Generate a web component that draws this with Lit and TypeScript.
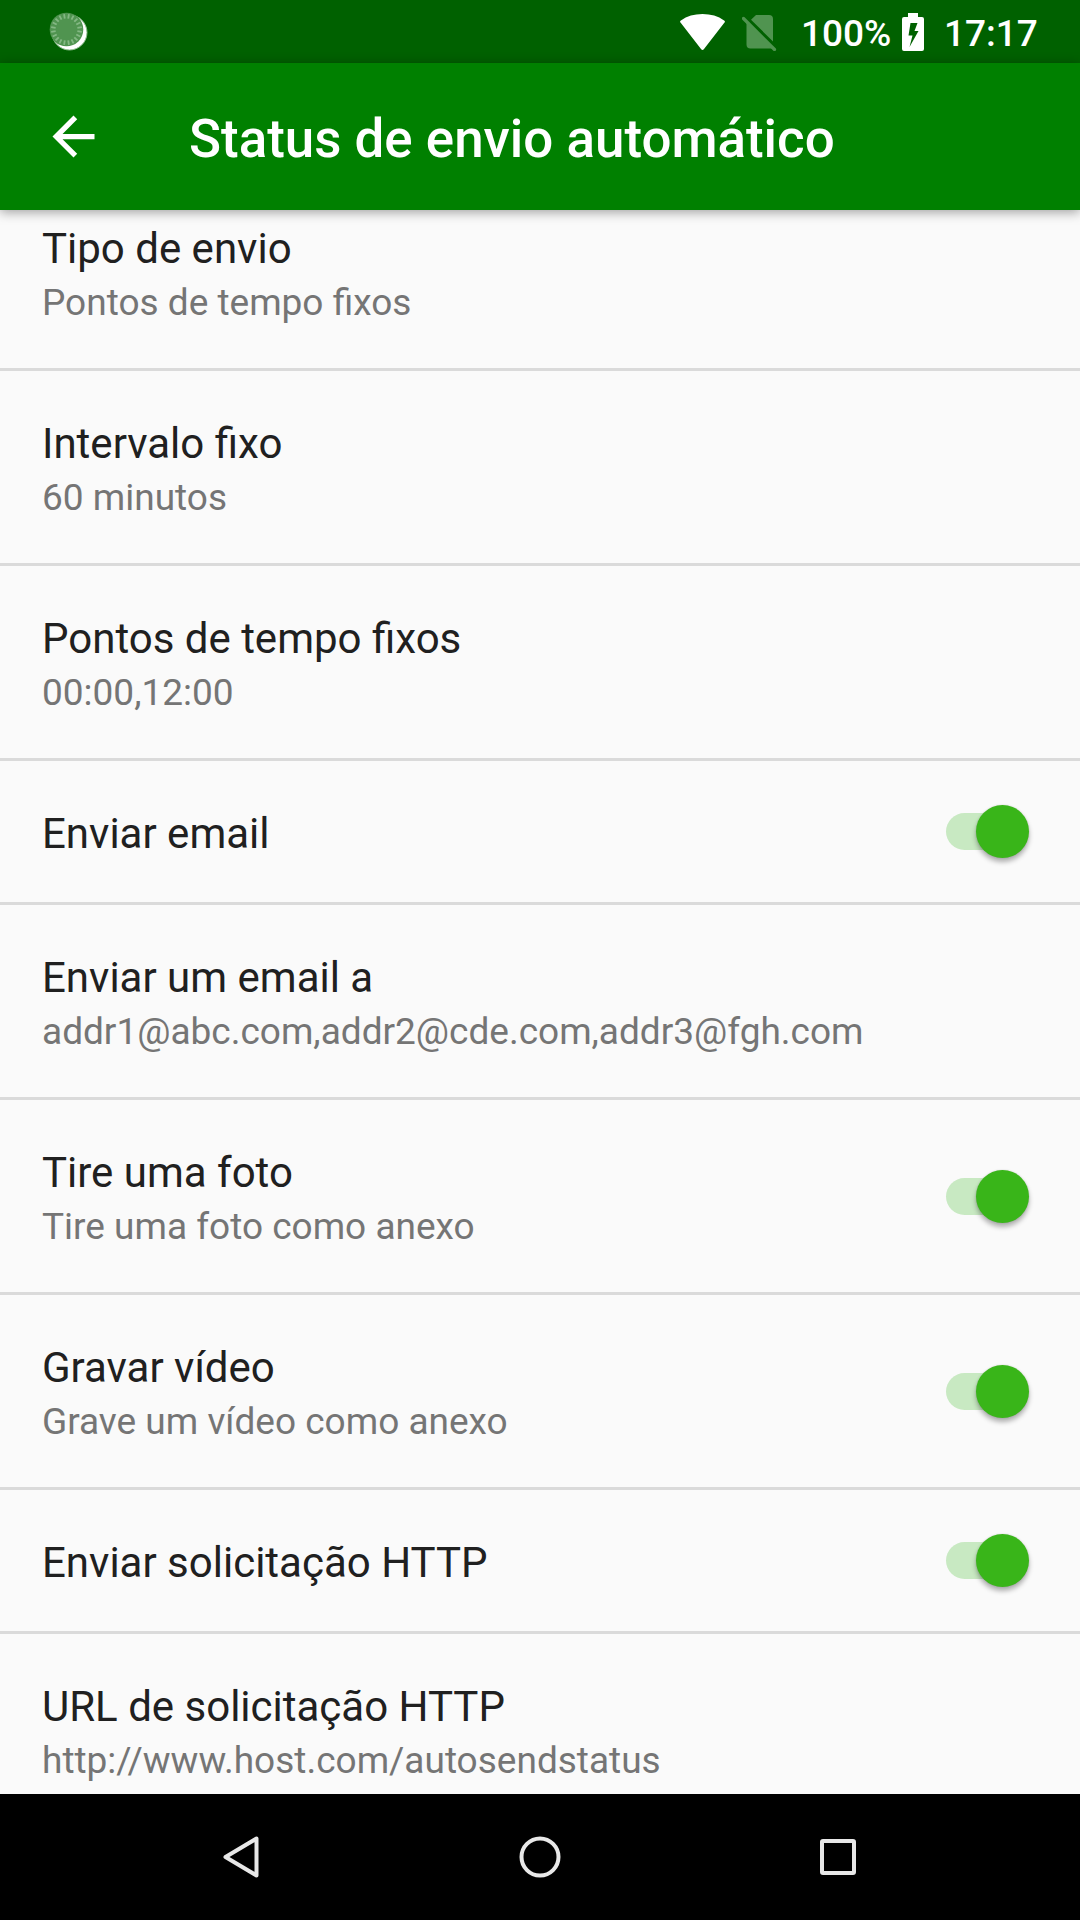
import { LitElement, html, css, svg } from "lit";
import { customElement } from "lit/decorators.js";

interface Setting {
  title: string;
  summary?: string;
  on?: boolean;
}

const SETTINGS: Setting[] = [
  { title: "Tipo de envio", summary: "Pontos de tempo fixos" },
  { title: "Intervalo fixo", summary: "60 minutos" },
  { title: "Pontos de tempo fixos", summary: "00:00,12:00" },
  { title: "Enviar email", on: true },
  { title: "Enviar um email a", summary: "addr1@abc.com,addr2@cde.com,addr3@fgh.com" },
  { title: "Tire uma foto", summary: "Tire uma foto como anexo", on: true },
  { title: "Gravar vídeo", summary: "Grave um vídeo como anexo", on: true },
  { title: "Enviar solicitação HTTP", on: true },
  { title: "URL de solicitação HTTP", summary: "http://www.host.com/autosendstatus" },
];

const ticks = Array.from({ length: 20 }, (_, i) => {
  const a = (i * Math.PI) / 10 + Math.PI / 20;
  return svg`<line x1=${17.5 + 11 * Math.cos(a)} y1=${17.5 + 11 * Math.sin(a)}
    x2=${17.5 + 15.5 * Math.cos(a)} y2=${17.5 + 15.5 * Math.sin(a)} stroke="#84b884" stroke-width="1.8"/>`;
});

@customElement("app-root")
export class AppRoot extends LitElement {
  static styles = css`
    :host { display: block; font-family: Roboto, "Liberation Sans", sans-serif; }
    svg { display: block; flex: none; }
    .screen { display: flex; flex-direction: column; width: 1080px; height: 1920px; overflow: hidden; background: #fafafa; }
    .status { flex: none; height: 63px; box-sizing: border-box; padding: 0 42px 0 49px; background: #006100; color: #fff; display: flex; align-items: center; font-size: 37px; font-weight: 500; line-height: 63px; }
    .spacer { flex: 1; }
    .sim { margin-left: 17px; }
    .level { margin-left: 23px; width: 92px; padding-top: 3px; white-space: nowrap; }
    .battery { margin-left: 9px; }
    .clock { margin-left: 20px; width: 94px; padding-top: 3px; white-space: nowrap; }
    .bar { flex: none; height: 147px; box-sizing: border-box; padding-left: 42px; background: #008000; color: #fff; display: flex; align-items: center; gap: 84px; box-shadow: 0 2px 11px rgba(0,0,0,.38); z-index: 1; }
    .heading { margin: 0; padding-top: 4px; font-size: 52.9px; font-weight: 500; line-height: 62px; white-space: nowrap; }
    .list { flex: 1; min-height: 0; overflow: hidden; }
    .row { display: flex; align-items: center; justify-content: space-between; height: 192px; padding: 0 51px 0 42px; border-bottom: 3px solid #dadada; }
    .row:first-child { margin-top: -34px; }
    .row.single { height: 141px; }
    .title { font-size: 42px; line-height: 50px; padding-top: 3px; color: #202020; white-space: nowrap; }
    .single .title { padding-top: 5px; }
    .summary { font-size: 37px; line-height: 43px; margin-top: 7px; margin-bottom: -1px; color: #757575; white-space: nowrap; }
    .switch { display: flex; align-items: center; justify-content: flex-end; width: 83px; height: 58px; }
    .track { display: flex; align-items: center; justify-content: flex-end; width: 83px; height: 37px; border-radius: 19px; background: linear-gradient(90deg, #c8e9c2 0 64px, transparent 64px); }
    .thumb { flex: none; width: 53px; height: 53px; border-radius: 50%; background: #39b519; box-shadow: 0 4px 5px rgba(0,0,0,.3), 0 0 2px rgba(0,0,0,.15); }
    .nav { flex: none; height: 126px; background: #000; display: grid; grid-template-columns: repeat(3, 298px); justify-content: center; place-items: center; }
  `;

  private row(s: Setting) {
    return html`<div class="row ${s.summary ? "" : "single"}">
      <div class="text">
        <div class="title">${s.title}</div>
        ${s.summary ? html`<div class="summary">${s.summary}</div>` : ""}
      </div>
      ${s.on ? html`<div class="switch" role="switch" aria-checked="true"><div class="track"><div class="thumb"></div></div></div>` : ""}
    </div>`;
  }

  render() {
    return html`<div class="screen">
      <div class="status">
        <svg width="39" height="39" viewBox="0 0 39 39">
          <circle cx="20.5" cy="20.5" r="17.5" fill="#fff" stroke="#8cbc8c"/>
          <circle cx="17.5" cy="17.5" r="16.8" fill="#509450"/>
          ${ticks}
        </svg>
        <div class="spacer"></div>
        <svg width="45" height="38" viewBox="0 0 45 38"><path d="M.5 9.6C-.2 8.8 0 8 .9 7.4Q10 1 22.500 1T44.100 7.400C45 8 45.200 8.800 44.500 9.600L24 36Q22.500 38 21 36Z" fill="#fff"/></svg>
        <svg class="sim" width="36" height="38" viewBox="0 0 36 38"><path d="M14 2H27Q31 2 31 6V28.500L9 6.800ZM4.500 9L30.500 35.500H8.500Q4.500 35.500 4.500 31.500Z" fill="#509450"/><path d="M1.500 5.500L32.500 36.500" stroke="#509450" stroke-width="3.200" stroke-linecap="round"/></svg>
        <div class="level">100%</div>
        <svg class="battery" width="22" height="38" viewBox="0 0 22 38"><path fill="#fff" fill-rule="evenodd" d="M6 0H16V4H20Q22 4 22 6V36Q22 38 20 38H2Q0 38 0 36V6Q0 4 2 4H6ZM8.500 10L6.500 22.500H10.500L7.500 34L16.500 18H12.500L15.500 10Z"/></svg>
        <div class="clock">17:17</div>
      </div>
      <div class="bar">
        <svg width="63" height="63" viewBox="0 0 24 24"><path fill="#fff" d="M20 11H7.830l5.590-5.590L12 4l-8 8 8 8 1.410-1.410L7.830 13H20v-2z"/></svg>
        <h1 class="heading">Status de envio automático</h1>
      </div>
      <div class="list">${SETTINGS.map((s) => this.row(s))}</div>
      <div class="nav">
        <svg width="48" height="48" viewBox="0 0 48 48"><path d="M38.500 5.500V42.500L7.500 24Z" fill="none" stroke="#e8e8e8" stroke-width="4" stroke-linejoin="round"/></svg>
        <svg width="48" height="48" viewBox="0 0 48 48"><circle cx="24" cy="24" r="18.500" fill="none" stroke="#e8e8e8" stroke-width="4"/></svg>
        <svg width="48" height="48" viewBox="0 0 48 48"><rect x="8" y="8" width="32" height="32" rx="1" fill="none" stroke="#e8e8e8" stroke-width="4"/></svg>
      </div>
    </div>`;
  }
}
